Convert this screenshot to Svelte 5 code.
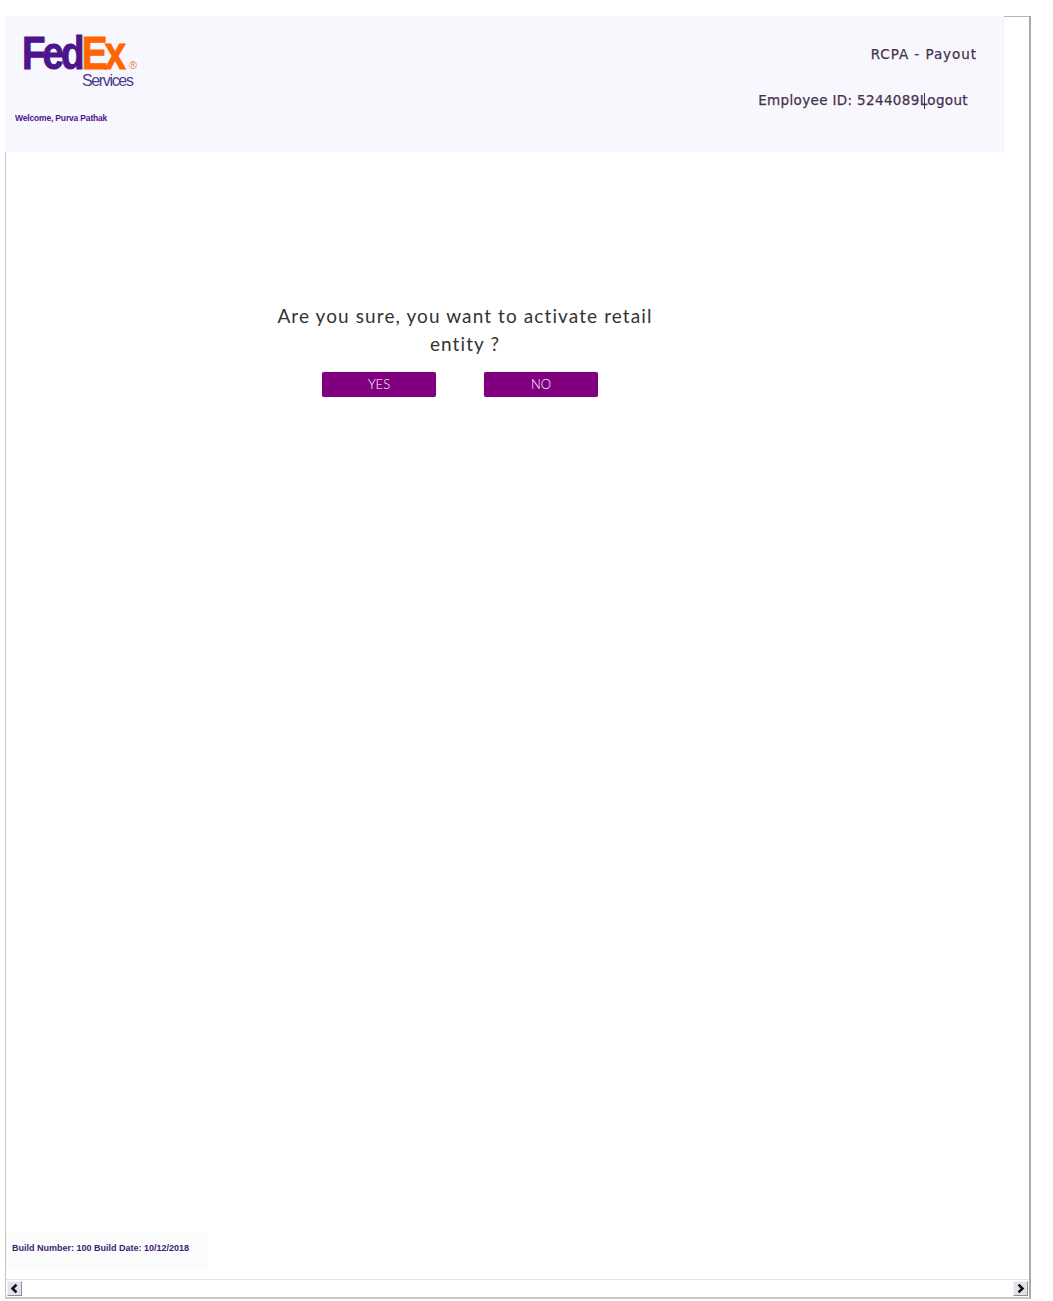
<script>
	let welcome = 'Welcome, Purva Pathak';
	let question = 'Are you sure, you want to activate retail entity ?';
</script>

<div class="page">
	<div class="frame">
		<header class="header">
			<div class="brand">
				<div class="logo">
					<div class="wordmark"><span class="fed">Fed</span><span class="ex">Ex</span></div>
					<span class="reg">®</span>
					<div class="services">Services</div>
				</div>
				<div class="welcome">{welcome}</div>
			</div>
			<div class="info">
				<div class="app-name">RCPA - Payout</div>
				<div class="employee">Employee ID: 5244089<span class="logout">Logout</span></div>
			</div>
		</header>

		<main class="content">
			<p class="question">{question}</p>
			<div class="actions">
				<button class="btn">YES</button>
				<button class="btn">NO</button>
			</div>
		</main>

		<footer class="footer">Build Number: 100 Build Date: 10/12/2018</footer>

		<div class="scrollbar">
			<div class="arrow">
				<svg width="11" height="11" viewBox="0 0 10 10"><path d="M6.8 1.5 3.2 5l3.6 3.5" fill="none" stroke="#111" stroke-width="2.4" /></svg>
			</div>
			<div class="arrow">
				<svg width="11" height="11" viewBox="0 0 10 10"><path d="M3.2 1.5 6.8 5 3.2 8.5" fill="none" stroke="#111" stroke-width="2.4" /></svg>
			</div>
		</div>
	</div>
</div>

<style>
	:global(body) {
		margin: 0;
		background: #fff;
	}

	.page {
		height: 1301px;
		padding: 16px 0 0 5px;
		box-sizing: border-box;
		overflow: hidden;
	}

	.frame {
		width: 1026px;
		height: 1283px;
		box-sizing: border-box;
		display: flex;
		flex-direction: column;
		border-left: 1px solid #c4c4c4;
		border-right: 2px solid #a9aaa2;
		border-bottom: 2px solid #c9c9c4;
		position: relative;
	}

	.frame::before {
		content: '';
		position: absolute;
		top: 0;
		right: 0;
		width: 25px;
		height: 1px;
		background: #b5b5b5;
	}

	.header {
		width: 1000px;
		height: 136px;
		flex: none;
		margin-left: -1px;
		display: flex;
		justify-content: space-between;
		background: repeating-linear-gradient(90deg, #f4f4fc 0 1px, #fbfbff 1px 2px);
	}

	.brand {
		padding: 18px 0 0 10px;
	}

	.logo {
		margin-left: 8px;
		width: 118px;
		height: 54px;
		position: relative;
	}

	.wordmark {
		font-family: 'Liberation Sans', sans-serif;
		font-weight: 700;
		font-size: 47px;
		line-height: 38px;
		letter-spacing: -3.6px;
		white-space: nowrap;
		-webkit-text-stroke: 1px currentColor;
		color: #4d148c;
		transform: scaleX(0.82);
		transform-origin: left center;
		margin-left: -1px;
	}

	.ex {
		color: #ff6600;
	}

	.reg {
		position: absolute;
		left: 106px;
		top: 26px;
		font-family: 'Liberation Sans', sans-serif;
		font-size: 11px;
		line-height: 11px;
		color: #e8833a;
	}

	.services {
		position: absolute;
		left: 59px;
		top: 37px;
		font-family: 'Liberation Sans', sans-serif;
		font-size: 16px;
		line-height: 20px;
		letter-spacing: -1.35px;
		color: #4d3b8c;
	}

	.welcome {
		margin-top: 24px;
		font-family: 'Liberation Sans', sans-serif;
		font-size: 8.5px;
		font-weight: 700;
		line-height: 12px;
		letter-spacing: -0.17px;
		color: #4d148c;
	}

	.info {
		display: flex;
		flex-direction: column;
		align-items: flex-end;
		font-family: 'DejaVu Sans', sans-serif;
		font-size: 13.5px;
		line-height: 18px;
		color: #46324f;
		-webkit-text-stroke: 0.25px currentColor;
	}

	.app-name {
		margin: 29px 28px 0 0;
		letter-spacing: 0.95px;
	}

	.employee {
		margin: 28px 37px 0 0;
		letter-spacing: 0.35px;
		white-space: nowrap;
	}

	.logout {
		position: relative;
	}

	/* the separator sits right on top of the L, as in the original */
	.logout::before {
		content: '';
		position: absolute;
		left: 4px;
		top: 1px;
		width: 1px;
		height: 16px;
		background: #46324f;
	}

	.content {
		flex: 1;
		padding: 150px 0 0 262px;
		width: 400px;
	}

	.question {
		margin: 0;
		width: 394px;
		font-family: Lato, 'Open Sans', sans-serif;
		font-size: 19px;
		line-height: 28px;
		letter-spacing: 1.1px;
		text-align: center;
		color: #333;
	}

	.actions {
		display: flex;
		gap: 48px;
		margin: 14px 0 0 54px;
	}

	.btn {
		width: 114px;
		height: 25px;
		padding: 0;
		border: 0;
		border-radius: 2px;
		background: #800080;
		box-shadow: 0 0 1px 0 #c080c0;
		color: #fff;
		font-family: Lato, sans-serif;
		font-size: 13px;
		font-weight: 300;
		line-height: 25px;
		text-align: center;
	}

	.footer {
		width: 195px;
		height: 37px;
		flex: none;
		padding-left: 6px;
		margin-bottom: 9px;
		background: repeating-linear-gradient(90deg, #fafafa 0 1px, #fefefe 1px 2px);
		font-family: 'Liberation Sans', sans-serif;
		font-size: 9px;
		font-weight: 700;
		line-height: 30px;
		color: #3f1a78;
		white-space: nowrap;
	}

	.scrollbar {
		height: 17px;
		flex: none;
		padding: 0 1px 0 1px;
		border-top: 1px solid #e2e2e2;
		display: flex;
		justify-content: space-between;
		align-items: center;
	}

	.arrow {
		width: 15px;
		height: 15px;
		box-sizing: border-box;
		display: flex;
		align-items: center;
		justify-content: center;
		background: #e2e2ec;
		border: 1px solid;
		border-color: #f4f4f4 #8f8f8f #8f8f8f #f4f4f4;
	}
</style>
